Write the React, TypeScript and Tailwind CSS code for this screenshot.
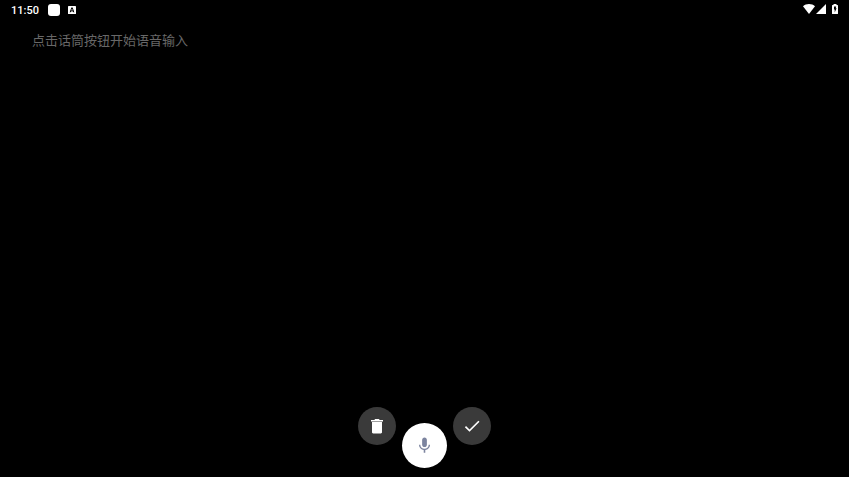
const ACTION_CLASS =
  "flex size-[38px] items-center justify-center rounded-full bg-[#3a3a3a] text-white";

function StatusBar() {
  return (
    <header className="flex h-5 items-start justify-between px-[11px] text-white">
      <div className="flex h-5 items-center gap-2">
        <time className="pt-0.5 font-['Roboto',sans-serif] text-[11px] leading-5 font-medium tabular-nums">
          11:50
        </time>
        <div className="ml-px size-3 rounded-[3px] bg-white" />
        <svg viewBox="0 0 8 8" className="size-2" aria-hidden="true">
          <rect width="8" height="8" rx="0.6" fill="#fff" />
          <path
            d="M2.200 6.300 3.700 1.800h.6L5.800 6.300M2.800 4.900h2.400"
            fill="none"
            stroke="#000"
            strokeWidth="1"
          />
        </svg>
      </div>
      <div className="flex items-center pt-1">
        <svg viewBox="0 0 24 20" className="h-2.5 w-3" aria-hidden="true">
          <path d="M12 20 0 4.500C3 1.800 7.300 0 12 0s9 1.800 12 4.500z" fill="currentColor" />
        </svg>
        <svg viewBox="0 0 10 10" className="ml-px size-2.5" aria-hidden="true">
          <path d="M10 0v10H0z" fill="currentColor" />
        </svg>
        <svg viewBox="0 0 6 10" className="ml-1.5 h-2.5 w-1.5" aria-hidden="true">
          <path
            d="M1.500 0h3v1h.900c.4 0 .6.200.6.600v7.800c0 .4-.2.600-.6.600H.6C.2 10 0 9.800 0 9.400V1.600C0 1.200.2 1 .6 1h.9z"
            fill="currentColor"
          />
          <path d="M2 2.400h2.200L3.700 4.300h.9L2.700 8.400V5.600H2z" fill="#000" />
        </svg>
      </div>
    </header>
  );
}

export default function App() {
  return (
    <div className="flex min-h-screen flex-col bg-black">
      <StatusBar />
      <main className="flex flex-1 flex-col">
        <textarea
          aria-label="语音输入"
          placeholder="点击话筒按钮开始语音输入"
          className="w-full flex-1 resize-none bg-transparent px-8 py-3 font-['Noto_Sans_CJK_SC',sans-serif] text-[13px] leading-4 text-white outline-none placeholder:text-[#686868]"
        />
        <div className="flex items-start justify-center gap-1.5 pb-[9px]">
          <button type="button" aria-label="清空" className={ACTION_CLASS}>
            <svg viewBox="0 0 20 20" className="size-5" fill="currentColor">
              <path d="M5 6h10v10.200c0 .7-.5 1.200-1.200 1.200H6.200c-.7 0-1.200-.5-1.200-1.200zM4 4h3.300l.8-1h3.800l.8 1H16v1.400H4z" />
            </svg>
          </button>
          <button
            type="button"
            aria-label="开始语音输入"
            className="mt-4 flex size-[45px] items-center justify-center rounded-full bg-white text-[#7c849f]"
          >
            <svg viewBox="0 0 24 24" className="size-[19px]" fill="currentColor">
              <path d="M12 14c1.660 0 3-1.340 3-3V5c0-1.660-1.340-3-3-3S9 3.340 9 5v6c0 1.660 1.340 3 3 3z" />
              <path d="M17.300 11c0 3-2.540 5.100-5.300 5.100S6.700 14 6.700 11H5c0 3.410 2.720 6.230 6 6.720V21h2v-3.280c3.280-.48 6-3.300 6-6.720h-1.700z" />
            </svg>
          </button>
          <button type="button" aria-label="完成" className={ACTION_CLASS}>
            <svg viewBox="0 0 24 24" className="size-5" fill="currentColor">
              <path d="M9 16.170 4.830 12l-1.420 1.410L9 19 21 7l-1.410-1.410z" />
            </svg>
          </button>
        </div>
      </main>
    </div>
  );
}
